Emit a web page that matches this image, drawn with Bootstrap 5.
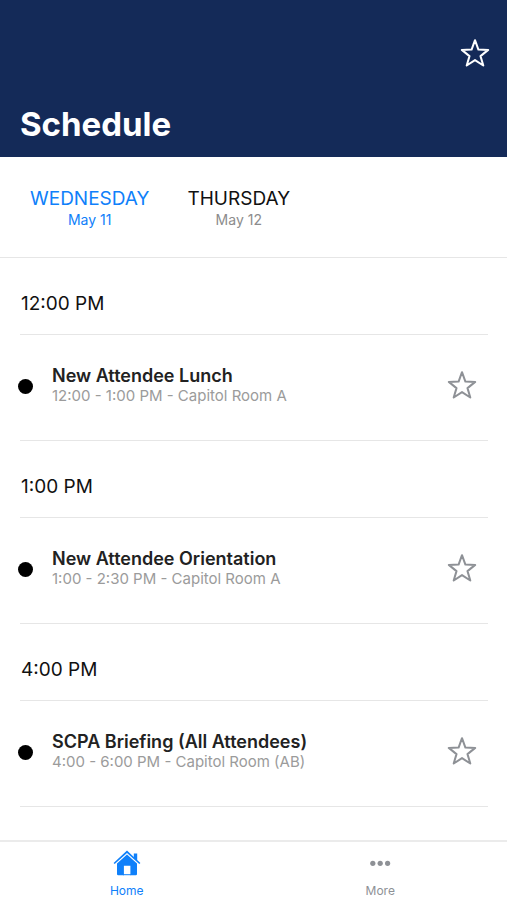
<!DOCTYPE html>
<html lang="en">
<head>
<meta charset="utf-8">
<meta name="viewport" content="width=device-width, initial-scale=1">
<title>Schedule</title>
<link href="https://cdn.jsdelivr.net/npm/bootstrap@5.3.0/dist/css/bootstrap.min.css" rel="stylesheet">
<style>
  body { font-family: Inter, "Liberation Sans", sans-serif; color: #111; background: #fff; }
  .app-header { background: #142a58; padding: 37px 17px 13px 20px; }
  .app-title { font-size: 33px; line-height: 40px; font-weight: 700; margin-top: 35px; }
  .star-btn { line-height: 0; color: #8e9196; }
  .star-btn svg { width: 30px; height: 32px; }
  .app-header .star-btn { color: #fff; }
  .day-tabs { gap: 38px; padding: 30px 30px 28px; border-bottom: 1px solid #e6e6e6; }
  .day-name { font-size: 19px; line-height: 24px; color: #111; }
  .day-date { font-size: 14px; line-height: 18px; color: #8c8c8c; }
  .active .day-name, .active .day-date { color: #0f80fa; }
  .agenda { padding: 0 19px 0 20px; margin-bottom: 60px; }
  .slot-time { font-size: 19px; line-height: 24px; font-weight: 400; padding: 34px 0 18px 1px; border-bottom: 1px solid #e6e6e6; }
  .session { padding: 30px 11px 35px 0; border-bottom: 1px solid #e6e6e6; }
  .session-dot { width: 15px; height: 15px; background: #000; margin: 3px 19px 0 -2px; }
  .session-name { font-size: 18px; line-height: 22px; font-weight: 600; color: #222; }
  .session-info { font-size: 15px; line-height: 18px; color: #9b9b9b; }
  .tab-bar { border-top: 2px solid #ebebeb; background: #fff; padding: 7px 0 2px; }
  .tab-link { font-size: 12px; line-height: 15px; color: #8e9196; gap: 6px; }
  .tab-link.active { color: #0f80fa; }
</style>
<script src="https://cdn.jsdelivr.net/npm/bootstrap@5.3.0/dist/js/bootstrap.bundle.min.js" defer></script>
</head>
<body>
<svg class="d-none" aria-hidden="true">
  <symbol id="star" viewBox="0 0 30 32">
    <path d="M15 3.2 18.4 12.6 28.2 12.9 20.5 19.1 23.3 28.5 15 23.1 6.7 28.5 9.5 19.1 1.8 12.9 11.6 12.6Z" fill="none" stroke="currentColor" stroke-width="2" stroke-linejoin="round"/>
  </symbol>
</svg>

<header class="app-header">
  <div class="d-flex justify-content-end">
    <button type="button" class="btn p-0 border-0 star-btn" aria-label="Favorites"><svg><use href="#star"/></svg></button>
  </div>
  <h1 class="app-title text-white mb-0">Schedule</h1>
</header>

<nav class="day-tabs d-flex" aria-label="Days">
  <a href="#wed" class="active text-decoration-none text-center" aria-current="true">
    <div class="day-name">WEDNESDAY</div>
    <div class="day-date">May 11</div>
  </a>
  <a href="#thu" class="text-decoration-none text-center">
    <div class="day-name">THURSDAY</div>
    <div class="day-date">May 12</div>
  </a>
</nav>

<main class="agenda" id="wed">
  <section>
    <h2 class="slot-time mb-0">12:00 PM</h2>
    <div class="session d-flex align-items-center">
      <span class="session-dot rounded-circle flex-shrink-0"></span>
      <div class="flex-grow-1">
        <h3 class="session-name mb-0">New Attendee Lunch</h3>
        <p class="session-info mb-0">12:00 - 1:00 PM - Capitol Room A</p>
      </div>
      <button type="button" class="btn p-0 border-0 star-btn" aria-label="Favorite New Attendee Lunch"><svg><use href="#star"/></svg></button>
    </div>
  </section>
  <section>
    <h2 class="slot-time mb-0">1:00 PM</h2>
    <div class="session d-flex align-items-center">
      <span class="session-dot rounded-circle flex-shrink-0"></span>
      <div class="flex-grow-1">
        <h3 class="session-name mb-0">New Attendee Orientation</h3>
        <p class="session-info mb-0">1:00 - 2:30 PM - Capitol Room A</p>
      </div>
      <button type="button" class="btn p-0 border-0 star-btn" aria-label="Favorite New Attendee Orientation"><svg><use href="#star"/></svg></button>
    </div>
  </section>
  <section>
    <h2 class="slot-time mb-0">4:00 PM</h2>
    <div class="session d-flex align-items-center">
      <span class="session-dot rounded-circle flex-shrink-0"></span>
      <div class="flex-grow-1">
        <h3 class="session-name mb-0">SCPA Briefing (All Attendees)</h3>
        <p class="session-info mb-0">4:00 - 6:00 PM - Capitol Room (AB)</p>
      </div>
      <button type="button" class="btn p-0 border-0 star-btn" aria-label="Favorite SCPA Briefing"><svg><use href="#star"/></svg></button>
    </div>
  </section>
</main>

<nav class="tab-bar fixed-bottom d-flex" aria-label="Main">
  <a href="#home" class="tab-link active d-flex flex-column align-items-center flex-fill w-50 text-decoration-none" aria-current="page">
    <svg width="28" height="28" viewBox="0 0 28 28" fill="currentColor" aria-hidden="true">
      <path d="M14 1.6 20.8 7.9V4.6H24.2V11L27.4 13.9 26.3 15.1 14 3.9 1.7 15.1.6 13.9Z"/>
      <path d="M14 5.4 24 14.5V25a1.2 1.2 0 0 1-1.2 1.2H17.4V16.8H10.9V26.2H5.2A1.2 1.2 0 0 1 4 25V14.5Z"/>
      <path d="M10 25.2H18V26.2H10Z"/>
    </svg>
    <span>Home</span>
  </a>
  <a href="#more" class="tab-link d-flex flex-column align-items-center flex-fill w-50 text-decoration-none">
    <svg width="28" height="28" viewBox="0 0 28 28" fill="currentColor" aria-hidden="true">
      <circle cx="6.8" cy="14.3" r="2.6"/><circle cx="14.2" cy="14.3" r="2.6"/><circle cx="21.6" cy="14.3" r="2.6"/>
    </svg>
    <span>More</span>
  </a>
</nav>
</body>
</html>
